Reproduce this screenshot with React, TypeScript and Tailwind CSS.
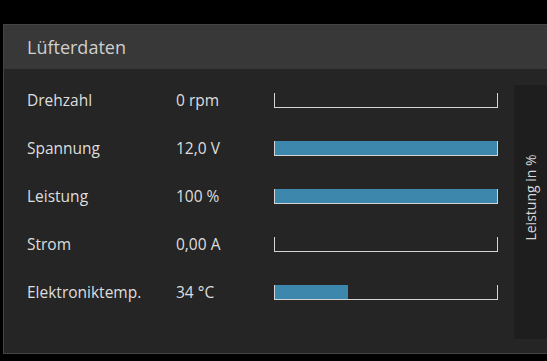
import React from "react";

const rows = [
  { label: "Drehzahl", value: "0 rpm", fill: 0 },
  { label: "Spannung", value: "12,0 V", fill: 100 },
  { label: "Leistung", value: "100 %", fill: 100 },
  { label: "Strom", value: "0,00 A", fill: 0 },
  { label: "Elektroniktemp.", value: "34 °C", fill: 33 },
];

const Bar = ({ fill }: { fill: number }) => (
  <div className="relative h-[15px] w-[224px] border-x border-b border-[#d4d4d4]">
    {fill > 0 && (
      <div className="h-full bg-[#3d87ad]" style={{ width: `${fill}%` }} />
    )}
  </div>
);

export default function App() {
  return (
    <div
      className="flex h-[361px] w-[547px] flex-col bg-black pl-[3px] pt-[24px] pb-[7px]"
      style={{ fontFamily: '"Open Sans", "Noto Sans", sans-serif' }}
    >
      <div className="flex flex-1 flex-col border-l border-b border-t border-[#444] bg-[#252525]">
        {/* Header */}
        <div className="flex h-[44px] items-center bg-[#383838] pl-[23px] text-[18px] text-[#cfcfcf]">
          Lüfterdaten
        </div>

        {/* Body */}
        <div className="flex flex-1 pt-[16px] pb-[14px]">
          <div className="flex flex-1 flex-col gap-[33px] pl-[23px] pt-[8px]">
            {rows.map((r) => (
              <div key={r.label} className="flex h-[15px] items-center text-[15.5px] text-[#dedede]">
                <span className="w-[149px]">{r.label}</span>
                <span className="w-[98px]">{r.value}</span>
                <Bar fill={r.fill} />
              </div>
            ))}
          </div>

          {/* Side tab */}
          <div className="flex w-[33px] items-center justify-center bg-[#1e1e1e] pb-[30px]">
            <span className="-rotate-90 whitespace-nowrap text-[14px] text-[#d8d8d8]">
              Leistung in %
            </span>
          </div>
        </div>
      </div>
    </div>
  );
}
